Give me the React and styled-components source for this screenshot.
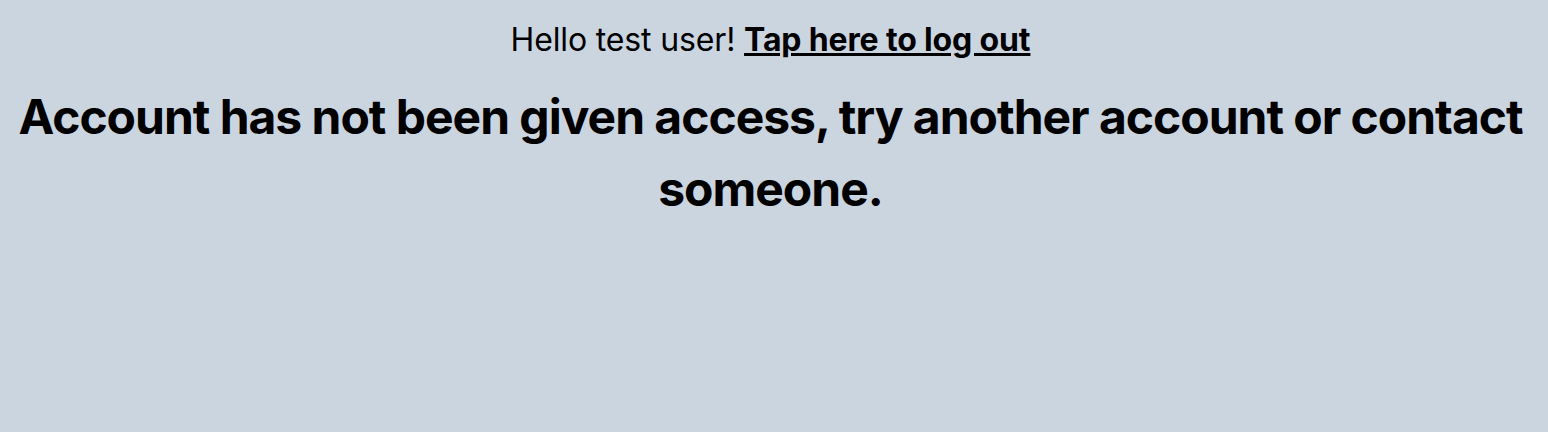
import React from 'react';
import styled, { createGlobalStyle } from 'styled-components';

const GlobalStyle = createGlobalStyle`
  html, body {
    margin: 0;
    padding: 0;
    background: #cbd5e0;
  }
  body {
    font-family: Inter, "Noto Sans", sans-serif;
    color: #000;
  }
`;

const Page = styled.div`
  min-height: 432px;
  padding: 16px 15px 0 8px;
  box-sizing: border-box;
  display: flex;
  flex-direction: column;
  align-items: center;
  text-align: center;
`;

const Greeting = styled.p`
  margin: 0;
  font-size: 32px;
  line-height: 48px;
  letter-spacing: -0.15px;
`;

const LogoutLink = styled.a`
  font-weight: 700;
  color: #000;
  text-decoration: underline;
  cursor: pointer;
`;

const Message = styled.h1`
  margin: 17px 0 0;
  font-size: 48px;
  line-height: 72px;
  font-weight: 700;
  letter-spacing: -1.02px;
`;

const App = () => {
  return (
    <>
      <GlobalStyle />
      <Page>
        <Greeting>
          Hello test user! <LogoutLink>Tap here to log out</LogoutLink>
        </Greeting>
        <Message>
          Account has not been given access, try another account or contact someone.
        </Message>
      </Page>
    </>
  );
};

export default App;
